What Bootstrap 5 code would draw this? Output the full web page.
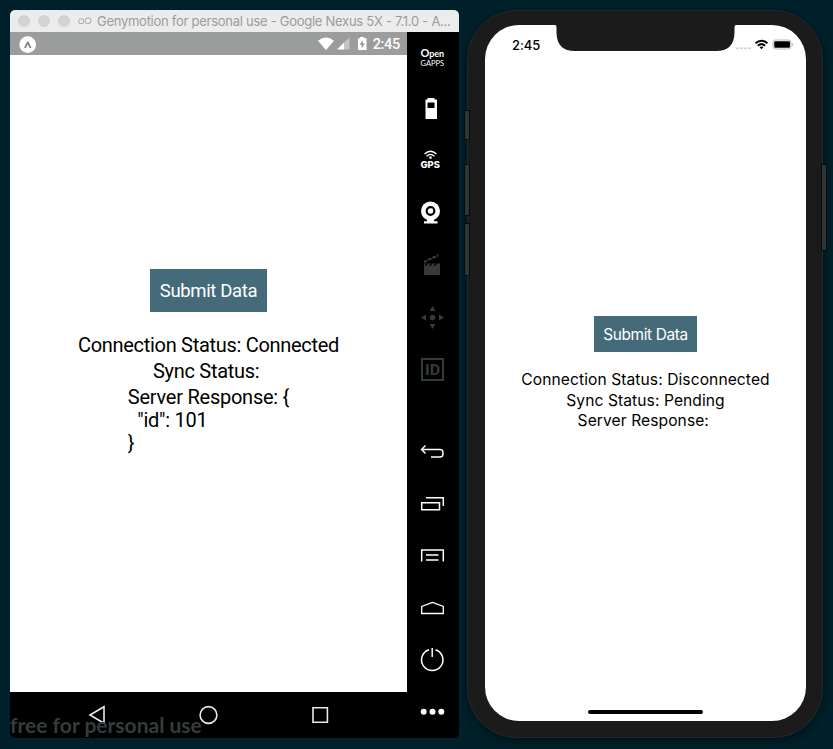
<!DOCTYPE html>
<html lang="en">
<head>
<meta charset="utf-8">
<meta name="viewport" content="width=device-width, initial-scale=1">
<title>Device emulators</title>
<link href="https://cdn.jsdelivr.net/npm/bootstrap@5.3.0/dist/css/bootstrap.min.css" rel="stylesheet">
<style>
body{background:#00212b;width:833px;height:749px;overflow:hidden;font-family:Roboto,"Liberation Sans",sans-serif;color:#000}
.desk{padding:10px 0 0 10px}
svg{display:block;flex:none}
.emu{width:449px;height:728px;border-radius:5px;background:#000}
.titlebar{height:22px;background:#ececec;color:#999c9b;font:13px/22px Inter,sans-serif;padding-left:8px}
.titlebar span{letter-spacing:-.27px;margin-left:5px}
.android{width:397px}
.astatus{height:23px;background:#9b9d9c;color:#fff;font-size:14.5px;font-weight:500;padding:2px 7px 0 9px}
.astatus span{letter-spacing:-.3px}
.ascreen{height:637px;padding-top:214px}
.submit{background:#456b7b;color:#fff;border:0;border-radius:0;padding:2px 0 0;line-height:1}
.ascreen .submit{width:117px;height:43px;font-size:18.5px;letter-spacing:-.35px;margin-bottom:20px}
.aline{font-size:20px;line-height:26px;letter-spacing:-.3px;white-space:pre}
.ajson{font:20px/23px Roboto,sans-serif;letter-spacing:-.25px;margin:2px 0 0;overflow:visible;color:#000}
.anav{height:46px}
.watermark{left:10px;top:712px;font:700 21px/26px Lato,sans-serif;color:#343c3d;white-space:nowrap}
.tools{width:52px}
.tools svg{width:52px;height:52px}
.gapline{height:30px}
.phone{width:354px;height:726px;margin:1px 0 0 9px;padding:14px 16px 16px 17px;background:#1b1b1b;border-radius:49px;box-shadow:0 0 0 1px #20292b,0 3px 10px 2px #00141b}
.pscreen{width:321px;height:696px;border-radius:34px;font-family:Inter,"Liberation Sans",sans-serif}
.pstatus{height:26px}
.pclock{width:70px;padding:11px 0 0 27px;font-size:13px;line-height:18px;font-weight:500;letter-spacing:-.1px}
.picons{width:70px;padding-top:14px}
.pbody{padding-top:265px}
.pbody .submit{width:103px;height:36px;font-size:15.4px;letter-spacing:-.35px;margin-bottom:18px}
.pline{font-size:15.6px;line-height:20.6px;letter-spacing:.08px;white-space:pre}
.homebar{width:115px;height:4px;border-radius:2px;background:#000;margin:auto auto 7px}
.side{background:#303636;border:1px solid #050a0b;width:6px}
</style>
</head>
<body>
<div class="desk d-flex align-items-start">
  <div class="emu overflow-hidden flex-shrink-0">
    <div class="titlebar d-flex align-items-center text-nowrap">
      <svg width="74" height="22"><g fill="#d1d4d3"><circle cx="6" cy="11" r="6"/><circle cx="26" cy="11" r="6"/><circle cx="46" cy="11" r="6"/></g><g fill="none" stroke="#a4a6a5"><rect x="60.7" y="9" width="5" height="4.5" rx="1.5"/><circle cx="70" cy="10.8" r="3"/></g></svg>
      <span>Genymotion for personal use - Google Nexus 5X - 7.1.0 - A...</span>
    </div>
    <div class="d-flex">
      <div class="android">
        <div class="astatus d-flex align-items-center">
          <svg width="18" height="18"><circle cx="8.7" cy="8.6" r="8.4" fill="#fff"/><path d="M5 12 8 5.600h1.500l3 6.400-1.800.3-1.900-4-1.900 4z" fill="#858887"/></svg>
          <svg class="ms-auto" width="55" height="18"><g fill="#fff"><path d="M0 4.700Q8-1.500 16 4.700L8 14z"/><path d="M19 13.500 26 6.500V13.500z"/><path d="M26 6.500 31.500 1.500V13.500H26z" opacity=".4"/><path d="M40 2.300h2V1h4v1.300h2.500V14H40z"/></g><path d="m44.700 4.200-3 4.600h2v3.400l3-4.800h-2z" fill="#8d908f"/></svg>
          <span>2:45</span>
        </div>
        <div class="ascreen bg-white d-flex flex-column align-items-center">
          <button class="submit btn" type="button">Submit Data</button>
          <div class="aline">Connection Status: Connected</div>
          <div class="aline">Sync Status: </div>
          <pre class="ajson">Server Response: {
  "id": 101
}</pre>
        </div>
        <div class="anav"><svg width="397" height="46" fill="none" stroke="#e8eae9" stroke-width="1.6"><path d="M80 23 94 14.700V31.300z"/><circle cx="198.500" cy="23" r="8.400"/><path d="M303 15.800h14.400v14.400H303z"/></svg></div>
      </div>
      <div class="tools text-white">
        <svg fill="#fff" font-family="Lato,sans-serif"><text x="13.500" y="25" font-size="9" font-weight="700" textLength="23.500"><tspan font-size="11">O</tspan>pen</text><text x="13.500" y="33.500" font-size="7.600" textLength="23.500" lengthAdjust="spacingAndGlyphs">GAPPS</text></svg>
        <svg><path fill="#fff" fill-rule="evenodd" d="M20.500 14h7v1.500H30V35H18.500V15.500h2zM20.500 18.500V24H27.500V18.500z"/></svg>
        <svg><g fill="none" stroke="#fff" stroke-width="1.300"><path d="M17.500 18Q23.500 12.500 29.500 18M19.500 20.200Q23.500 16.500 27.500 20.200"/></g><circle cx="23.500" cy="21.600" r="1.300" fill="#fff"/><text x="13.500" y="32" fill="#fff" font-family="Inter,sans-serif" font-weight="800" font-size="9" textLength="19.500" lengthAdjust="spacingAndGlyphs">GPS</text></svg>
        <svg><circle cx="23.500" cy="23" r="9.500" fill="#fff"/><circle cx="23.500" cy="23" r="3.800" fill="none" stroke="#000" stroke-width="2.200"/><circle cx="24.700" cy="21.800" r="1.200" fill="#fff"/><path d="M20 31h7v2.200h3.500V35.500H17V33.200h3z" fill="#fff"/></svg>
        <svg fill="#353b3b"><path d="M17 23.500h16V35H17z"/><path d="m16.500 21 14.500-7 1 2.300-14.500 6.700z"/><path d="m19 19 2.500 2.300m2-4.500 2.500 2.300m2-4.300 2.200 2M18 25.800l2.500-2.300m2 2.300 2.500-2.300m2 2.300 2.500-2.300" stroke="#000" stroke-width="1.200"/></svg>
        <svg fill="#353b3b"><circle cx="25.500" cy="25.500" r="2.800"/><path d="M25.500 14l3 5h-6zM25.500 37l3-5h-6zM14 25.500l5-3v6zM37 25.500l-5-3v6z"/></svg>
        <svg><path d="M15 15h21v21H15z" fill="none" stroke="#353b3b" stroke-width="2"/><text x="18" y="31" fill="#353b3b" font-family="Roboto,sans-serif" font-weight="700" font-size="15" textLength="15" lengthAdjust="spacingAndGlyphs">ID</text></svg>
        <div class="gapline"></div>
        <svg fill="none" stroke="#fff" stroke-width="1.400"><path d="M18.500 19.500l-4 4 4 4M14.500 23.500H33q3 0 3 3v1.500q0 3-3 3H24"/></svg>
        <svg fill="none" stroke="#fff" stroke-width="1.500"><path d="M14.700 24.700h17.800v7H14.700z"/><path d="M19 19.700h17.300v8.300"/></svg>
        <svg fill="none" stroke="#fff" stroke-width="1.500"><path d="M14.700 31.500V20h21.600v11.500M19 25h12.500M19 30h12.500"/></svg>
        <svg fill="none" stroke="#fff" stroke-width="1.300"><path d="M14.700 31.500V24.500L25.500 20.500l10.800 4v7z"/></svg>
        <svg fill="none" stroke="#fff" stroke-width="1.500"><path d="M22 15.700A10.700 10.700 0 1 0 28.500 15.700M25.200 14v9"/></svg>
        <svg fill="#fff"><circle cx="16.700" cy="25.700" r="3"/><circle cx="25.500" cy="25.700" r="3"/><circle cx="34.300" cy="25.700" r="3"/></svg>
      </div>
    </div>
  </div>
  <div class="phone flex-shrink-0">
    <div class="pscreen bg-white d-flex flex-column">
      <div class="pstatus d-flex justify-content-between">
        <div class="pclock">2:45</div>
        <svg width="181" height="26"><path d="M0 0Q1.500 0 1.500 3V8Q2 26 20 26H161Q179 26 179.500 8V3Q179.500 0 181 0z" fill="#1b1b1b"/></svg>
        <div class="picons"><svg width="60" height="12"><path d="M0 9.200h15.500" stroke="#d0d0d0" stroke-width="1.600" stroke-dasharray="3 1"/><g fill="none" stroke="#000" stroke-width="2"><path d="M19.500 4.300Q25.500-.8 31.500 4.300M21.800 6.800Q25.500 3.500 29.200 6.800"/></g><path d="M23.500 8.100Q25.500 6.800 27.500 8.100L25.500 10.300z"/><rect x="37" y="1" width="18" height="9" rx="2.500" fill="none" stroke="#b8b8b8"/><rect x="38.200" y="2.200" width="15.800" height="6.600" rx="1.200"/><path d="M56 4v3.200q1.600-1.600 0-3.200z" fill="#888"/></svg></div>
      </div>
      <div class="pbody d-flex flex-column align-items-center">
        <button class="submit btn" type="button">Submit Data</button>
        <div class="pline">Connection Status: Disconnected</div>
        <div class="pline">Sync Status: Pending</div>
        <div class="pline">Server Response: </div>
      </div>
      <div class="homebar"></div>
    </div>
  </div>
</div>
<div class="watermark position-absolute">free for personal use</div>
<div class="side position-absolute" style="left:464px;top:110px;height:30px"></div>
<div class="side position-absolute" style="left:464px;top:164px;height:52px"></div>
<div class="side position-absolute" style="left:464px;top:223px;height:53px"></div>
<div class="side position-absolute" style="left:821px;top:164px;height:87px"></div>
</body>
</html>
